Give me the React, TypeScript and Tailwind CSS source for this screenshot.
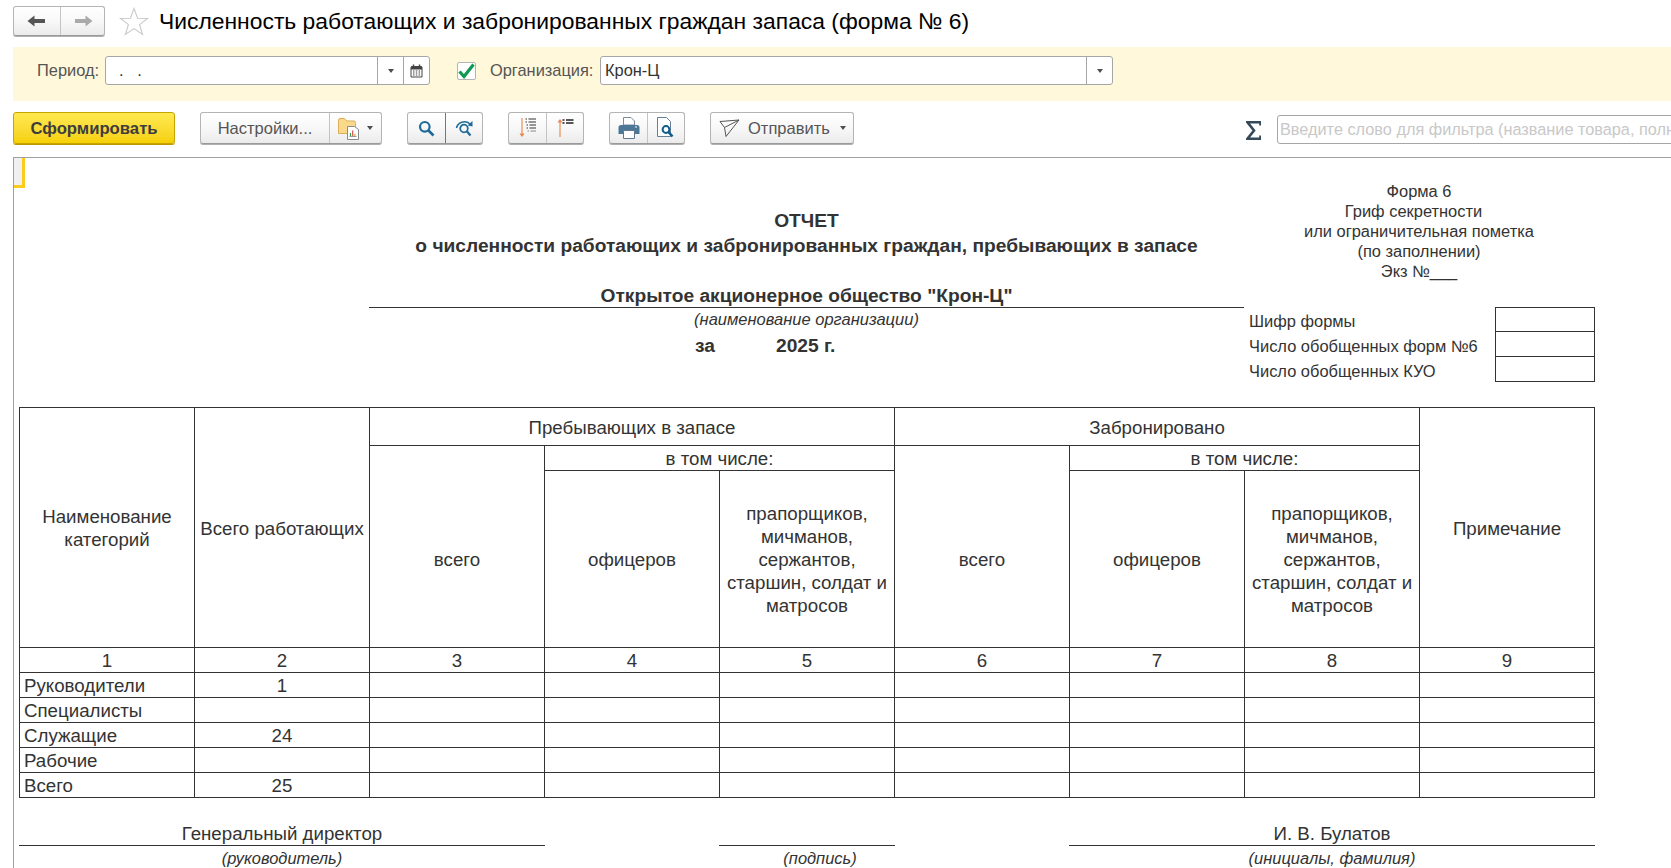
import React from "react";

const btn = "shrink-0 bg-linear-to-b from-white via-[#f8f8f8] to-[#ebebeb] border border-[#b4b4b4] border-b-[#9a9a9a] rounded-[3px] shadow-[0_1px_0_#b0b0b0]";
const field = "bg-white border border-[#a6a6a6] rounded-[3px]";

const Caret = () => (
  <svg width="6" height="4" viewBox="0 0 6 4"><path d="M0 0h6L3 4z" fill="#4d4d4d" /></svg>
);

const Back = ({ color }: { color: string }) => (
  <svg width="20" height="14" viewBox="0 0 20 14"><path d="M0.5 7 7.5 1.5V5H18V9H7.5V12.5Z" fill={color} /></svg>
);
const Forward = ({ color }: { color: string }) => (
  <svg width="20" height="14" viewBox="0 0 20 14"><path d="M19.5 7 12.5 1.5V5H2V9H12.5V12.5Z" fill={color} /></svg>
);
const Star = () => (
  <svg width="30" height="29" viewBox="0 0 30 29"><path d="M15 1.5 18.6 11.2 28.6 11.4 20.6 17.6 23.6 27.5 15 21.6 6.4 27.5 9.4 17.6 1.4 11.4 11.4 11.2Z" fill="#fff" stroke="#c9c9c9" strokeWidth="1.1" /></svg>
);
const Calendar = () => (
  <svg width="13" height="14" viewBox="0 0 13 14"><path d="M1 3.5A1 1 0 0 1 2 2.5H11A1 1 0 0 1 12 3.5V13H1Z" fill="#fff" stroke="#444" /><path d="M1 2.5H12V5.5H1Z" fill="#444" /><path d="M3.5 0.5V3M9.5 0.5V3" stroke="#444" strokeWidth="1.4" /><path d="M3 7H4.5M5.8 7H7.3M8.6 7H10.1M3 9H4.5M5.8 9H7.3M8.6 9H10.1M3 11H4.5M5.8 11H7.3M8.6 11H10.1" stroke="#444" strokeWidth="1.2" /></svg>
);
const Check = () => (
  <svg width="17" height="16" viewBox="0 0 17 16"><path d="M1.5 8.5 6 13.5 15.5 1.5" fill="none" stroke="#0f9950" strokeWidth="3.2" /></svg>
);
const FolderDoc = () => (
  <svg width="22" height="24" viewBox="0 0 22 24">
    <path d="M0.5 4A1.5 1.5 0 0 1 2 2.5H6.5L9 5H16A1.5 1.5 0 0 1 17.5 6.5V17.5H0.5Z" fill="#fbd98b" stroke="#dcae5a" />
    <path d="M9.5 10.5H16.5L20.5 13.5V23.5H9.5Z" fill="#fff" stroke="#8a8a8a" />
    <path d="M12.5 20V17" stroke="#2f9e4f" strokeWidth="1.2" /><path d="M14.7 20V14.5" stroke="#d9534f" strokeWidth="1.2" /><path d="M16.9 20V18" stroke="#e0a030" strokeWidth="1.2" />
    <path d="M11.5 20.5H18.5" stroke="#999" />
  </svg>
);
const Search = () => (
  <svg width="17" height="17" viewBox="0 0 17 17"><circle cx="6.8" cy="6.8" r="4.8" fill="none" stroke="#1f6a99" strokeWidth="2.2" /><path d="M10.5 10.5 15.5 15.5" stroke="#1f6a99" strokeWidth="2.6" /></svg>
);
const SearchAgain = () => (
  <svg width="19" height="18" viewBox="0 0 19 18">
    <circle cx="9" cy="9.5" r="3.8" fill="none" stroke="#1f6a99" strokeWidth="1.8" /><path d="M11.8 12.3 15.5 16.5" stroke="#1f6a99" strokeWidth="2.2" />
    <path d="M1.5 9C2.5 3.5 10 0.5 15 5" fill="none" stroke="#1f6a99" strokeWidth="1.6" /><path d="M17.5 2 17.5 7.5 12.5 6.5Z" fill="#1f6a99" />
  </svg>
);
const SortDown = () => (
  <svg width="18" height="20" viewBox="0 0 18 20">
    <path d="M3 0V17" stroke="#e8834a" strokeWidth="1.1" /><path d="M0.5 15.5H5.5L3 19Z" fill="#e8834a" />
    <path d="M6.5 1H8M9.5 1H17M6.5 4H8M9.5 4H17M7.5 7H9M10.5 7H17M7.5 10H9M10.5 10H17" stroke="#333" strokeWidth="1.2" />
    <path d="M8.5 13H10M11.5 13H17" stroke="#888" strokeWidth="1.2" />
  </svg>
);
const SortUp = () => (
  <svg width="17" height="20" viewBox="0 0 17 20">
    <path d="M3 3V19" stroke="#e8834a" strokeWidth="1.1" /><path d="M0.5 4.5H5.5L3 1Z" fill="#e8834a" />
    <path d="M5.5 2H7.5M9 2H16.5M5.5 5H7.5M9 5H16.5" stroke="#222" strokeWidth="1.4" />
  </svg>
);
const Printer = () => (
  <svg width="22" height="22" viewBox="0 0 22 22">
    <path d="M5.5 8V0.5H13L16.5 4V8Z" fill="#fff" stroke="#7c8b99" />
    <path d="M3 8H19A2.5 2.5 0 0 1 21.5 10.5V17H0.5V10.5A2.5 2.5 0 0 1 3 8Z" fill="#4d7797" />
    <path d="M5.5 13.5H16.5V21.5H5.5Z" fill="#fff" stroke="#5f7a90" />
    <path d="M17 10H19" stroke="#fff" />
  </svg>
);
const Preview = () => (
  <svg width="18" height="22" viewBox="0 0 18 22">
    <path d="M0.5 0.5H9.5L13.5 4.5V19.5H0.5Z" fill="#fff" stroke="#66809a" />
    <circle cx="9" cy="12.5" r="3.4" fill="#fff" stroke="#0f5b8c" strokeWidth="2" /><path d="M11.5 15 15.5 19.5" stroke="#0f5b8c" strokeWidth="2.6" />
  </svg>
);
const Plane = () => (
  <svg width="21" height="19" viewBox="0 0 21 19"><path d="M1 2.5 20 1 7 17.5 5.5 8.5ZM5.5 8.5 20 1" fill="none" stroke="#555" strokeWidth="1" /></svg>
);
const Sigma = () => (
  <svg width="15" height="19" viewBox="0 0 15 19"><path d="M14.5 4.5V1.2H1.5L8 9.5 1.5 17.8H14.5V14.5" fill="none" stroke="#34495a" strokeWidth="2.6" /></svg>
);

const cell = "border border-[#333] text-center align-middle px-[4px] leading-[23px]";
const tight = "pt-[1px]";
const bodyRows: [string, string][] = [
  ["Руководители", "1"],
  ["Специалисты", ""],
  ["Служащие", "24"],
  ["Рабочие", ""],
  ["Всего", "25"],
];
const rest = [3, 4, 5, 6, 7, 8, 9];
const longLabel = "прапорщиков, мичманов, сержантов, старшин, солдат и матросов";

export default function App() {
  return (
    <div className="w-[1671px] h-[868px] overflow-hidden bg-white flex flex-col font-['Liberation_Sans',Arial,sans-serif] text-[#333]">
      {/* Title row */}
      <div className="h-[47px] flex items-start pt-[6px] pl-[13px] shrink-0">
        <div className={`${btn} w-[92px] h-[30px] flex`}>
          <div className="w-[47px] flex items-center justify-center border-r border-[#c4c4c4]"><Back color="#555" /></div>
          <div className="flex-1 flex items-center justify-center"><Forward color="#aaa" /></div>
        </div>
        <div className="ml-[14px] mt-[1px]"><Star /></div>
        <div className="ml-[10px] text-[22.87px] leading-[30px] text-black whitespace-nowrap">Численность работающих и забронированных граждан запаса (форма № 6)</div>
      </div>

      {/* Filter band */}
      <div className="h-[54px] ml-[13px] shrink-0 bg-[#fff8da] flex items-start pt-[9px] text-[16.4px]">
        <span className="ml-[24px] w-[68px] text-[#555] leading-[29px]">Период:</span>
        <div className={`${field} w-[325px] h-[29px] flex shrink-0`}>
          <div className="flex-1 pl-[13px] leading-[27px] text-[#333]">.&nbsp;&nbsp;&nbsp;.</div>
          <div className="w-[26px] border-l border-[#a6a6a6] flex items-center justify-center"><Caret /></div>
          <div className="w-[26px] border-l border-[#a6a6a6] flex items-center justify-center"><Calendar /></div>
        </div>
        <div className="ml-[27px] mt-[6px] w-[19px] h-[18px] bg-white border border-[#b4b4b4] rounded-[2px] flex items-center justify-center"><Check /></div>
        <span className="ml-[14px] w-[110px] text-[#555] leading-[29px]">Организация:</span>
        <div className={`${field} w-[513px] h-[29px] flex shrink-0`}>
          <div className="flex-1 pl-[4px] leading-[27px] text-[#333]">Крон-Ц</div>
          <div className="w-[26px] border-l border-[#a6a6a6] flex items-center justify-center"><Caret /></div>
        </div>
      </div>

      {/* Toolbar */}
      <div className="h-[33px] mt-[11px] ml-[13px] shrink-0 flex items-start text-[16.5px]">
        <div className="shrink-0 w-[162px] h-[32px] pt-[1px] flex items-center justify-center rounded-[3px] border border-[#c7a500] bg-linear-to-b from-[#ffe94f] to-[#f6d000] shadow-[0_1px_0_#b89a00] font-bold text-[#3d3d3d] text-[16.7px]">Сформировать</div>
        <div className={`${btn} ml-[25px] w-[182px] h-[32px] flex`}>
          <div className="w-[129px] border-r border-[#c4c4c4] flex items-center justify-center text-[#555]">Настройки...</div>
          <div className="flex-1 flex items-center justify-center gap-[7px]"><FolderDoc /><Caret /></div>
        </div>
        <div className={`${btn} ml-[25px] w-[76px] h-[32px] flex`}>
          <div className="w-[37px] flex items-center justify-center"><Search /></div>
          <div className="flex-1 flex items-center justify-center border-l border-[#777]"><SearchAgain /></div>
        </div>
        <div className={`${btn} ml-[25px] w-[76px] h-[32px] flex`}>
          <div className="w-[38px] border-r border-[#c4c4c4] flex items-center justify-center"><SortDown /></div>
          <div className="flex-1 flex items-center justify-center"><SortUp /></div>
        </div>
        <div className={`${btn} ml-[25px] w-[76px] h-[32px] flex`}>
          <div className="w-[38px] border-r border-[#c4c4c4] flex items-center justify-center"><Printer /></div>
          <div className="flex-1 flex items-center justify-center"><Preview /></div>
        </div>
        <div className={`${btn} ml-[25px] w-[144px] h-[32px] flex items-center text-[#555]`}>
          <span className="ml-[8px]"><Plane /></span>
          <span className="ml-[8px]">Отправить</span>
          <span className="ml-[10px]"><Caret /></span>
        </div>
        <div className="shrink-0 ml-[392px] mt-[9px]"><Sigma /></div>
        <div className="ml-[16px] mt-[3px] w-[500px] h-[29px] shrink-0 bg-white border border-[#a6a6a6] rounded-[3px] pl-[2px] leading-[27px] text-[16.3px] text-[#c8c8c8] whitespace-nowrap overflow-hidden">Введите слово для фильтра (название товара, полное наименование)</div>
      </div>

      {/* Report area */}
      <div className="relative mt-[12px] ml-[13px] flex-1 border-l border-t border-[#a0a0a0] min-h-0">
        <div className="absolute left-0 top-0 w-[11px] h-[30px] bg-[#f0f0f0] border-r-[3px] border-b-[3px] border-[#fccb1e]" />
        <div className="ml-[5px] text-[16.45px]">
          {/* Report heading */}
          <div className="grid grid-cols-[350px_875px_350px] w-[1575px] h-[249px]">
            <div />
            <div className="pt-[50px] flex flex-col text-[19.2px] text-center">
              <div className="h-[25px] leading-[25px] font-bold">ОТЧЕТ</div>
              <div className="h-[25px] leading-[25px] font-bold whitespace-nowrap">о численности работающих и забронированных граждан, пребывающих в запасе</div>
              <div className="h-[25px]" />
              <div className="h-[25px] leading-[25px] font-bold border-b border-[#333]">Открытое акционерное общество "Крон-Ц"</div>
              <div className="h-[25px] leading-[23px] italic text-[16.5px]">(наименование организации)</div>
              <div className="h-[25px] leading-[25px] font-bold flex pl-[326px]">
                <span className="w-[81px] text-left">за</span>
                <span>2025 г.</span>
              </div>
            </div>
            <div className="pt-[23px] flex flex-col">
              <div className="text-center leading-[20px]">
                <div>Форма 6</div>
                <div className="pr-[11px]">Гриф секретности</div>
                <div>или ограничительная пометка</div>
                <div>(по заполнении)</div>
                <div>Экз №___</div>
              </div>
              <div className="mt-[26px] grid grid-cols-[251px_100px] grid-rows-[25px_25px_25px]">
                <div className="pl-[5px] pt-[2px] leading-[25px]">Шифр формы</div>
                <div className="border border-[#333]" />
                <div className="pl-[5px] pt-[2px] leading-[25px]">Число обобщенных форм №6</div>
                <div className="border border-t-0 border-[#333]" />
                <div className="pl-[5px] pt-[2px] leading-[25px]">Число обобщенных КУО</div>
                <div className="border border-t-0 border-[#333]" />
              </div>
            </div>
          </div>

          {/* Main table */}
          <table className="table-fixed w-[1575px] border-collapse text-[18.7px]">
            <colgroup>
              {[1, 2, 3, 4, 5, 6, 7, 8, 9].map((i) => <col key={i} className="w-[175px]" />)}
            </colgroup>
            <tbody>
              <tr className="h-[38px]">
                <td rowSpan={3} className={`${cell} ${tight}`}>Наименование категорий</td>
                <td rowSpan={3} className={`${cell} ${tight} px-0 whitespace-nowrap`}>Всего работающих</td>
                <td colSpan={3} className={`${cell} ${tight}`}>Пребывающих в запасе</td>
                <td colSpan={3} className={`${cell} ${tight}`}>Забронировано</td>
                <td rowSpan={3} className={`${cell} ${tight}`}>Примечание</td>
              </tr>
              <tr className="h-[25px]">
                <td rowSpan={2} className={`${cell} pt-[25px]`}>всего</td>
                <td colSpan={2} className={`${cell} ${tight}`}>в том числе:</td>
                <td rowSpan={2} className={`${cell} pt-[25px]`}>всего</td>
                <td colSpan={2} className={`${cell} ${tight}`}>в том числе:</td>
              </tr>
              <tr className="h-[177px]">
                <td className={`${cell} ${tight}`}>офицеров</td>
                <td className={`${cell} ${tight}`}>{longLabel}</td>
                <td className={`${cell} ${tight}`}>офицеров</td>
                <td className={`${cell} ${tight}`}>{longLabel}</td>
              </tr>
              <tr className="h-[25px]">
                {[1, 2, 3, 4, 5, 6, 7, 8, 9].map((n) => <td key={n} className={`${cell} py-0`}>{n}</td>)}
              </tr>
              {bodyRows.map(([name, value]) => (
                <tr key={name} className="h-[25px]">
                  <td className={`${cell} py-0 pt-[1px] text-left`}>{name}</td>
                  <td className={`${cell} py-0 pt-[1px]`}>{value}</td>
                  {rest.map((n) => <td key={n} className={`${cell} py-0`} />)}
                </tr>
              ))}
            </tbody>
          </table>

          {/* Signatures */}
          <div className="grid grid-cols-[526px_174px_176px_174px_526px] w-[1576px] mt-[24px] text-center">
            <div className="h-[24px] leading-[24px] text-[18.7px] border-b border-[#333]">Генеральный директор</div>
            <div />
            <div className="h-[24px] border-b border-[#333]" />
            <div />
            <div className="h-[24px] leading-[24px] text-[18.7px] border-b border-[#333]">И. В. Булатов</div>
            <div className="leading-[25px] italic">(руководитель)</div>
            <div />
            <div className="leading-[25px] italic pl-[26px]">(подпись)</div>
            <div />
            <div className="leading-[25px] italic">(инициалы, фамилия)</div>
          </div>
        </div>
      </div>
    </div>
  );
}
